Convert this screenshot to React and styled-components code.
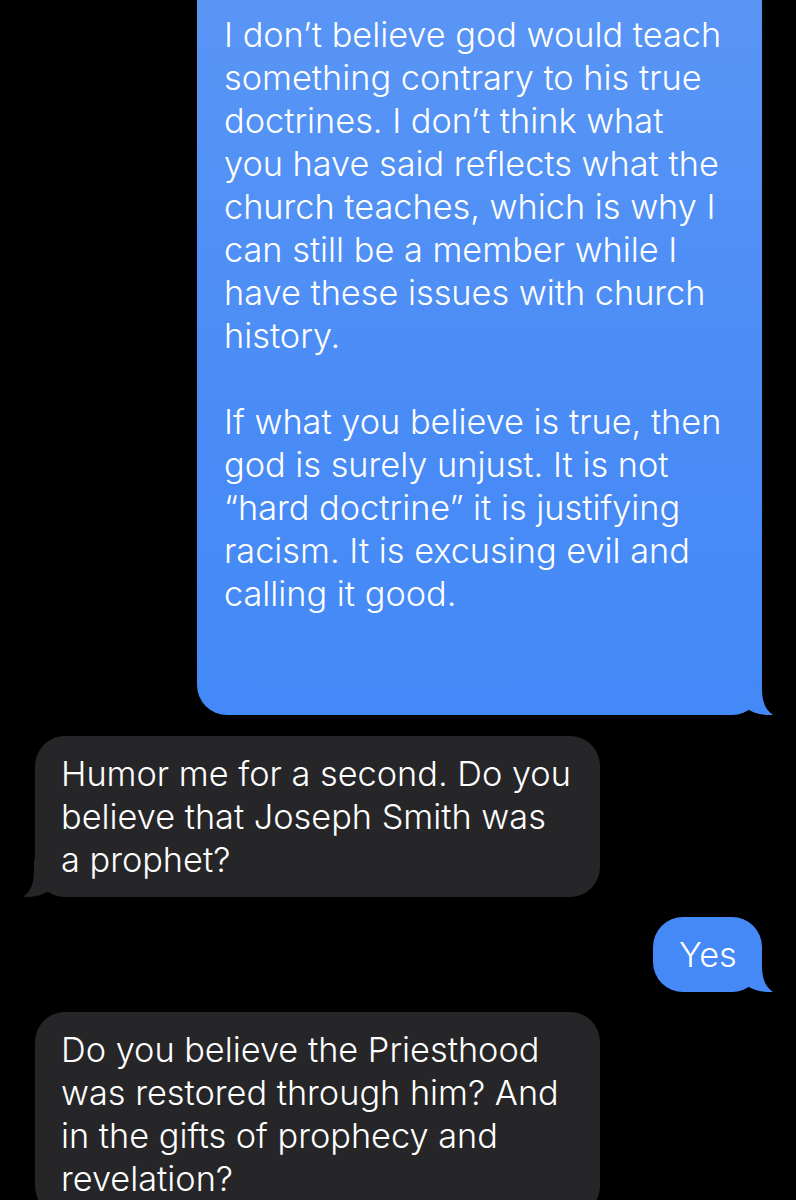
import React from "react";
import styled, { createGlobalStyle } from "styled-components";

const sentBlue = '#4589f7';
const receivedGray = '#262629';

const GlobalStyle = createGlobalStyle`
  html, body {
    margin: 0;
    padding: 0;
    background: #000;
  }
  body {
    font-family: Inter, Roboto, "Noto Sans", sans-serif;
    -webkit-font-smoothing: antialiased;
  }
`

const Thread = styled.div`
  display: flex;
  flex-direction: column;
  gap: 20px;
  height: 1200px;
  overflow: hidden;
`

const Bubble = styled.div`
  position: relative;
  box-sizing: border-box;
  width: ${({ $width }) => $width}px;
  padding: 16px 26px;
  border-radius: 30px;
  color: #fff;
  font-size: 34.3px;
  font-weight: 350;
  line-height: 43px;
  letter-spacing: 0;
  white-space: pre-line;
  background: ${({ $sent }) => ($sent ? sentBlue : receivedGray)};
  align-self: ${({ $sent }) => ($sent ? 'flex-end' : 'flex-start')};
  margin: ${({ $sent }) => ($sent ? '0 34px 0 0' : '0 0 0 35px')};
`

const LongSent = styled(Bubble)`
  margin-top: -40px;
  margin-bottom: 1px;
  padding: 53px 30px 100px 27px;
  background: linear-gradient(180deg, #5a96f5 0%, #4a8cf6 60%, #4389f7 100%);
`

const Tail = styled.svg`
  position: absolute;
  bottom: 0;
  width: 40px;
  height: 40px;
  ${({ $sent }) => ($sent ? 'right: -11px;' : 'left: -12px; transform: scaleX(-1);')}
`

function BubbleTail({ sent }) {
  return (
    <Tail $sent={sent} viewBox="0 0 40 40">
      <path
        d="M29 2 L29 14 C29 27 33 35.5 40 40 C31 40.6 21 38.5 14 34 L12 20 Z"
        fill={sent ? sentBlue : receivedGray}
      />
    </Tail>
  );
}

export default function App() {
  return (
    <>
      <GlobalStyle />
      <Thread>
        <LongSent $sent $width={565}>
          {`I don’t believe god would teach
something contrary to his true
doctrines. I don’t think what
you have said reflects what the
church teaches, which is why I
can still be a member while I
have these issues with church
history.

If what you believe is true, then
god is surely unjust. It is not
“hard doctrine” it is justifying
racism. It is excusing evil and
calling it good.`}
          <BubbleTail sent />
        </LongSent>
        <Bubble $width={565}>
          {`Humor me for a second. Do you
believe that Joseph Smith was
a prophet?`}
          <BubbleTail />
        </Bubble>
        <Bubble $sent $width={109}>
          Yes
          <BubbleTail sent />
        </Bubble>
        <Bubble $width={565}>
          {`Do you believe the Priesthood
was restored through him? And
in the gifts of prophecy and
revelation?`}
        </Bubble>
      </Thread>
    </>
  );
}
